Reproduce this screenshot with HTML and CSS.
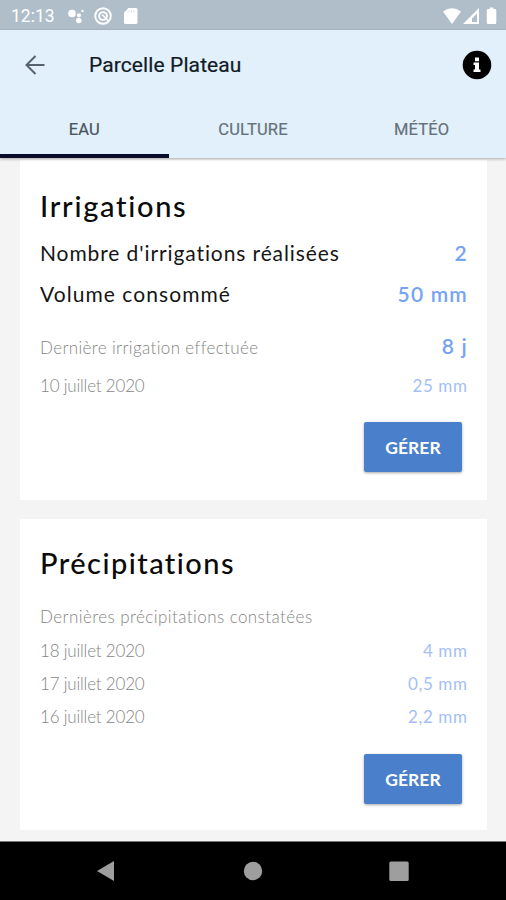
FILE: index.html
```html
<!DOCTYPE html>
<html lang="fr">
<head>
<meta charset="utf-8">
<title>Parcelle Plateau</title>
<link rel="stylesheet" href="styles.css">
</head>
<body>
<div class="screen">
  <div class="status">
    <span class="clock">12:13</span>
    <svg class="status-left" width="72" height="20" viewBox="0 0 72 20" fill="#fff">
      <circle cx="4" cy="7.500" r="3.8"/><circle cx="11" cy="9.200" r="2"/><circle cx="10.800" cy="14.500" r="2.8"/><circle cx="14.500" cy="5" r="1.2"/>
      <circle cx="35" cy="10" r="7.8" fill="none" stroke="#fff" stroke-width="1.900"/>
      <circle cx="35" cy="10" r="3.9" fill="none" stroke="#fff" stroke-width="1.900"/>
      <path d="M34 8.500l6.500 6.500" stroke="#fff" stroke-width="1.6"/>
      <path d="M60.500 2h7.500q1.500 0 1.500 1.500v13q0 1.500-1.500 1.500h-10.500q-1.500 0-1.500-1.500V6.500z"/>
      <path d="M61 4v2.500M63.500 4v2.500M66 4v2.500" stroke="#dbe2e8"/>
    </svg>
    <svg class="status-right" width="56" height="20" viewBox="0 0 56 20" fill="#fff">
      <path d="M1 5.500Q10-1 19 5.500L10 18z"/>
      <path fill-rule="evenodd" d="M37 2v16H21zM35 7.500v8.500h-5v-3.500z"/>
      <path d="M46 3h1.800V1.500h3.500V3h1.800q1.200 0 1.200 1.200v12.300q0 1.500-1.200 1.500H46q-1.200 0-1.200-1.500V4.200Q44.800 3 46 3z"/>
    </svg>
  </div>
  <header class="header">
    <div class="toolbar">
      <svg class="back" width="22" height="22" viewBox="0 0 22 22" fill="none" stroke="#56636d" stroke-width="2"><path d="M20.500 11H2.500M11.500 2L2.500 11l9 9"/></svg>
      <h1>Parcelle Plateau</h1>
      <svg class="info" width="30" height="30" viewBox="0 0 30 30"><circle cx="15" cy="15" r="14.300"/><path fill="#fff" d="M13 7.500h4v3.800h-4zM11.500 12.500H17v7h1.500v2.500h-7v-2.500H13V15h-1.500z"/></svg>
    </div>
    <nav class="tabs">
      <span class="tab active">EAU</span><span class="tab">CULTURE</span><span class="tab">MÉTÉO</span>
    </nav>
  </header>
  <main class="content">
    <section class="card irrigation">
      <h2 class="t1">Irrigations</h2>
      <div class="row"><span class="r1">Nombre d'irrigations réalisées</span><b>2</b></div>
      <div class="row"><span class="r2">Volume consommé</span><b>50 mm</b></div>
      <div class="row small first"><span class="r3">Dernière irrigation effectuée</span><b>8 j</b></div>
      <div class="row small"><span class="date">10 juillet 2020</span><i>25 mm</i></div>
      <button>GÉRER</button>
    </section>
    <section class="card rain">
      <h2 class="t2">Précipitations</h2>
      <div class="row small first"><span class="r4">Dernières précipitations constatées</span></div>
      <div class="row small"><span class="date">18 juillet 2020</span><i>4 mm</i></div>
      <div class="row small"><span class="date">17 juillet 2020</span><i>0,5 mm</i></div>
      <div class="row small"><span class="date">16 juillet 2020</span><i>2,2 mm</i></div>
      <button>GÉRER</button>
    </section>
  </main>
  <footer class="navbar">
    <svg width="20" height="24" viewBox="0 0 20 24"><path d="M1 12L18 2v20z"/></svg>
    <svg width="20" height="24" viewBox="0 0 20 24"><circle cx="10" cy="12" r="9.200"/></svg>
    <svg width="20" height="24" viewBox="0 0 20 24"><rect x=".3" y="2.500" width="19.400" height="19.400" rx="1.500"/></svg>
  </footer>
</div>
</body>
</html>
```
FILE: styles.css
```css
* { box-sizing: border-box; }
body { margin: 0; font-family: Lato, sans-serif; font-variant-ligatures: none; }
.screen { width: 506px; height: 900px; display: flex; flex-direction: column; overflow: hidden; background: #f4f4f4; }
.status { height: 30px; flex: none; background: #b0bec9; display: flex; align-items: center; padding: 1px 8px 0 11px; }
.clock { font: 17.500px/30px Roboto, sans-serif; color: #fff; width: 57px; }
.status-right { margin-left: auto; }
.header { height: 128px; flex: none; background: #e2f0fc; box-shadow: 0 1px 3px rgba(0,0,0,.3); display: flex; flex-direction: column; z-index: 1; }
.toolbar { height: 70px; display: flex; align-items: center; padding: 0 14px 0 24px; }
h1 { margin: 0 auto 0 43px; font: 400 21px/30px Roboto, sans-serif; letter-spacing: .1px; color: #101b26; -webkit-text-stroke: .2px #101b26; }
.tabs { flex: 1; display: grid; grid-template-columns: repeat(3, 1fr); }
.tab { font: 400 16.500px/50px Roboto, sans-serif; padding-top: 5px; height: 58px; letter-spacing: .2px; text-align: center; color: #65717a; -webkit-text-stroke: .2px currentColor; }
.active { color: #48545e; border-bottom: 4px solid #080b29; }
.content { flex: 1; padding: 2px 19px 0 20px; }
.card { background: #fff; padding: 0 20px; display: flex; flex-direction: column; }
.irrigation { height: 340px; margin-bottom: 19px; padding-top: 26px; }
.rain { height: 311px; padding-top: 24px; }
h2 { margin: 0; font-weight: 500; font-size: 29px; line-height: 40px; color: #0b0b0b; white-space: nowrap; }
.t1 { letter-spacing: 1.700px; }
.t2 { letter-spacing: 1.450px; }
.row { height: 41px; display: flex; align-items: center; justify-content: space-between; font-size: 21px; color: #151515; white-space: nowrap; }
.irrigation h2 + .row { margin-top: 6px; }
.r1 { letter-spacing: .9px; }
.r2 { letter-spacing: 1.060px; }
.r3 { letter-spacing: .36px; }
.r4 { letter-spacing: .43px; }
.date { letter-spacing: -.2px; }
.row b { color: #75a4f2; font-size: 21px; font-weight: 600; letter-spacing: 1.200px; margin-right: -1px; }
.row i { color: #a3bff5; font-style: normal; font-weight: 400; letter-spacing: .6px; margin-right: -.5px; }
.small { height: 38px; font-size: 17px; font-weight: 300; color: #858585; }
.small b { padding-bottom: 2px; }
.irrigation .first { margin-top: 13px; }
.irrigation .first > span, .irrigation .first + .small > * { padding-top: 2px; }
.rain .small { height: 33.400px; }
.rain .first { margin-top: 17px; }
button { width: 98px; height: 50px; margin: 19px 5px 0 auto; border: 0; border-radius: 2px; background: #4a80cb; color: #fff; font: 700 17.500px/50px Lato, sans-serif; padding: 1px 0 0; box-shadow: 0 1px 3px rgba(0,0,0,.35); }
.rain button { margin-top: 20px; }
.navbar { height: 59px; flex: none; background: #000; border-top: 1px solid #777; display: flex; justify-content: space-between; align-items: center; padding: 0 97px 0 96px; fill: #9e9e9e; }
```
